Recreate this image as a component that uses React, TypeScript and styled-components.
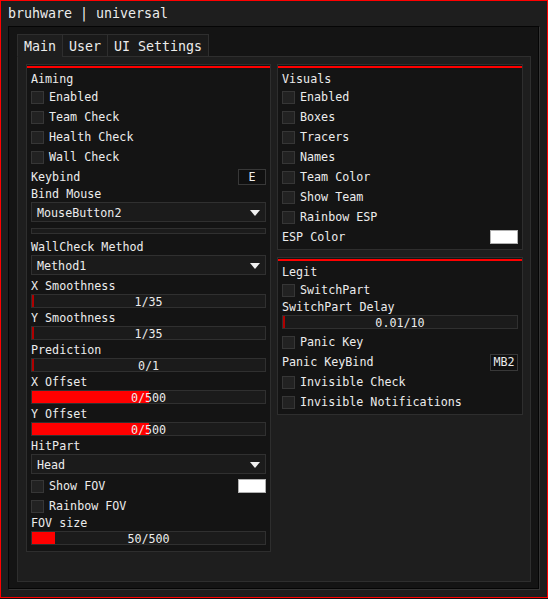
import React from "react";
import styled, { createGlobalStyle } from "styled-components";

const Global = createGlobalStyle`
  html, body { margin: 0; padding: 0; background: #0f0f0f; }
  * { box-sizing: border-box; }
  body { font-family: "DejaVu Sans Mono", "Liberation Mono", monospace; color: #ececec; }
`;

const Window = styled.div`
  width: 548px;
  height: 598px;
  border: 1px solid #ff0000;
  background: #1e1e1e;
  display: flex;
  flex-direction: column;
  padding: 0 8px 8px 7px;
`;

const TitleBar = styled.div`
  height: 25px;
  display: flex;
  align-items: center;
  font-size: 13.3px;
  color: #ececec;
  padding-bottom: 1px;
`;

const ChildFrame = styled.div`
  flex: 1;
  background: #141414;
  border: 1px solid #050505;
  box-shadow: 1px 1px 0 #353535;
  padding: 7px 7px 6px 8px;
  display: flex;
  flex-direction: column;
`;

const TabBar = styled.div`
  display: flex;
  height: 23px;
`;

const Tab = styled.div<{ $active?: boolean; $last?: boolean }>`
  height: 23px;
  padding: 1px 6px 0 6px;
  display: flex;
  align-items: center;
  font-size: 13.3px;
  color: #ececec;
  background: ${(p) => (p.$active ? "#1e1e1e" : "#1a1a1a")};
  border-top: 1px solid #2e2e2e;
  border-left: 1px solid #2e2e2e;
  border-right: ${(p) => (p.$last ? "1px solid #2e2e2e" : "none")};
  border-bottom: ${(p) => (p.$active ? "1px solid #1e1e1e" : "1px solid #2e2e2e")};
`;

const TabFiller = styled.div`
  flex: 1;
  border-bottom: 1px solid #2e2e2e;
`;

const Panel = styled.div`
  flex: 1;
  background: #1e1e1e;
  border: 1px solid #2e2e2e;
  border-top: none;
  padding: 7px 7px 0 8px;
  display: grid;
  grid-template-columns: 245px 246px;
  column-gap: 6px;
  align-items: start;
`;

const Column = styled.div`
  display: flex;
  flex-direction: column;
  gap: 7px;
`;

const Group = styled.div<{ $pb?: number }>`
  background: #141414;
  border: 1px solid #2e2e2e;
  padding: 1px 0 ${(p) => p.$pb ?? 3}px 0;
  display: flex;
  flex-direction: column;
`;

const RedBar = styled.div`
  height: 2px;
  background: #ff0000;
`;

const GroupBody = styled.div`
  padding: 0 4px;
  display: flex;
  flex-direction: column;
  font-size: 11.7px;
`;

const GroupTitle = styled.div`
  height: 18px;
  display: flex;
  align-items: center;
  padding-top: 3px;
`;

const Row = styled.div<{ $mt?: number }>`
  height: 20px;
  display: flex;
  align-items: center;
  justify-content: space-between;
  padding-top: 2px;
  margin-top: ${(p) => p.$mt ?? 0}px;
`;

const CheckLabel = styled.label`
  display: flex;
  align-items: center;
  gap: 5px;
`;

const Box = styled.span`
  width: 13px;
  height: 13px;
  background: #222222;
  border: 1px solid #363636;
  display: inline-block;
`;

const Label = styled.div<{ $mt?: number }>`
  height: 14px;
  display: flex;
  align-items: center;
  padding-top: 2px;
  margin-top: ${(p) => p.$mt ?? 0}px;
`;

const KeyButton = styled.div<{ $h?: number }>`
  width: 28px;
  height: ${(p) => p.$h ?? 16}px;
  border: 1px solid #383838;
  background: #101010;
  display: flex;
  align-items: center;
  justify-content: center;
  font-size: 11.7px;
`;

const Swatch = styled.div<{ $h?: number }>`
  width: 28px;
  height: ${(p) => p.$h ?? 14}px;
  background: #ffffff;
  border: 1px solid #b0b0b0;
`;

const Dropdown = styled.div<{ $mt?: number }>`
  height: 20px;
  margin-top: ${(p) => p.$mt ?? 2}px;
  border: 1px solid #303030;
  background: #1b1b1b;
  display: flex;
  align-items: center;
  justify-content: space-between;
  padding: 1px 5px 0 5px;
`;

const EmptyBar = styled.div`
  height: 6px;
  margin-top: 6px;
  border: 1px solid #303030;
  background: #1b1b1b;
`;

const SliderTrack = styled.div<{ $mt?: number }>`
  position: relative;
  height: 14px;
  margin-top: ${(p) => p.$mt ?? 2}px;
  border: 1px solid #303030;
  background: #1b1b1b;
  display: flex;
  align-items: center;
  justify-content: center;
  padding-top: 1px;
  overflow: hidden;
`;

const SliderFill = styled.div<{ $dim?: boolean }>`
  position: absolute;
  left: 0;
  top: 0;
  bottom: 0;
  background: ${(p) => (p.$dim ? "#b00000" : "#ff0000")};
`;

const SliderText = styled.span`
  position: relative;
  font-size: 11.7px;
  color: #ececec;
`;

const Arrow = () => (
  <svg width="10" height="6" viewBox="0 0 10 6">
    <polygon points="0,0 10,0 5,6" fill="#f0f0f0" />
  </svg>
);

const Check = ({ label }: { label: string }) => (
  <Row>
    <CheckLabel>
      <Box />
      {label}
    </CheckLabel>
  </Row>
);

const Slider = ({ text, pct, mt }: { text: string; pct: number; mt?: number }) => (
  <SliderTrack $mt={mt}>
    <SliderFill $dim={pct <= 0} style={{ width: pct <= 0 ? "2px" : `${pct}%` }} />
    <SliderText>{text}</SliderText>
  </SliderTrack>
);

export default function App() {
  return (
    <>
      <Global />
      <Window>
        <TitleBar>bruhware | universal</TitleBar>
        <ChildFrame>
          <TabBar>
            <Tab $active>Main</Tab>
            <Tab>User</Tab>
            <Tab $last>UI Settings</Tab>
            <TabFiller />
          </TabBar>
          <Panel>
            <Column>
              <Group $pb={6}>
                <RedBar />
                <GroupBody>
                  <GroupTitle>Aiming</GroupTitle>
                  <Check label="Enabled" />
                  <Check label="Team Check" />
                  <Check label="Health Check" />
                  <Check label="Wall Check" />
                  <Row>
                    <span>Keybind</span>
                    <KeyButton>E</KeyButton>
                  </Row>
                  <Label>Bind Mouse</Label>
                  <Dropdown>
                    <span>MouseButton2</span>
                    <Arrow />
                  </Dropdown>
                  <EmptyBar />
                  <Label $mt={5}>WallCheck Method</Label>
                  <Dropdown>
                    <span>Method1</span>
                    <Arrow />
                  </Dropdown>
                  <Label $mt={3}>X Smoothness</Label>
                  <Slider text="1/35" pct={0} />
                  <Label $mt={2}>Y Smoothness</Label>
                  <Slider text="1/35" pct={0} />
                  <Label $mt={2}>Prediction</Label>
                  <Slider text="0/1" pct={0} />
                  <Label $mt={2}>X Offset</Label>
                  <Slider text="0/500" pct={50} />
                  <Label $mt={2}>Y Offset</Label>
                  <Slider text="0/500" pct={50} />
                  <Label $mt={2}>HitPart</Label>
                  <Dropdown>
                    <span>Head</span>
                    <Arrow />
                  </Dropdown>
                  <Row $mt={1}>
                    <CheckLabel>
                      <Box />
                      Show FOV
                    </CheckLabel>
                    <Swatch />
                  </Row>
                  <Check label="Rainbow FOV" />
                  <Label>FOV size</Label>
                  <Slider text="50/500" pct={10} />
                </GroupBody>
              </Group>
            </Column>
            <Column>
              <Group>
                <RedBar />
                <GroupBody>
                  <GroupTitle>Visuals</GroupTitle>
                  <Check label="Enabled" />
                  <Check label="Boxes" />
                  <Check label="Tracers" />
                  <Check label="Names" />
                  <Check label="Team Color" />
                  <Check label="Show Team" />
                  <Check label="Rainbow ESP" />
                  <Row>
                    <span>ESP Color</span>
                    <Swatch />
                  </Row>
                </GroupBody>
              </Group>
              <Group>
                <RedBar />
                <GroupBody>
                  <GroupTitle>Legit</GroupTitle>
                  <Check label="SwitchPart" />
                  <Label>SwitchPart Delay</Label>
                  <Slider text="0.01/10" pct={0} />
                  <Row $mt={2}>
                    <CheckLabel>
                      <Box />
                      Panic Key
                    </CheckLabel>
                  </Row>
                  <Row>
                    <span>Panic KeyBind</span>
                    <KeyButton $h={17}>MB2</KeyButton>
                  </Row>
                  <Check label="Invisible Check" />
                  <Check label="Invisible Notifications" />
                </GroupBody>
              </Group>
            </Column>
          </Panel>
        </ChildFrame>
      </Window>
    </>
  );
}
